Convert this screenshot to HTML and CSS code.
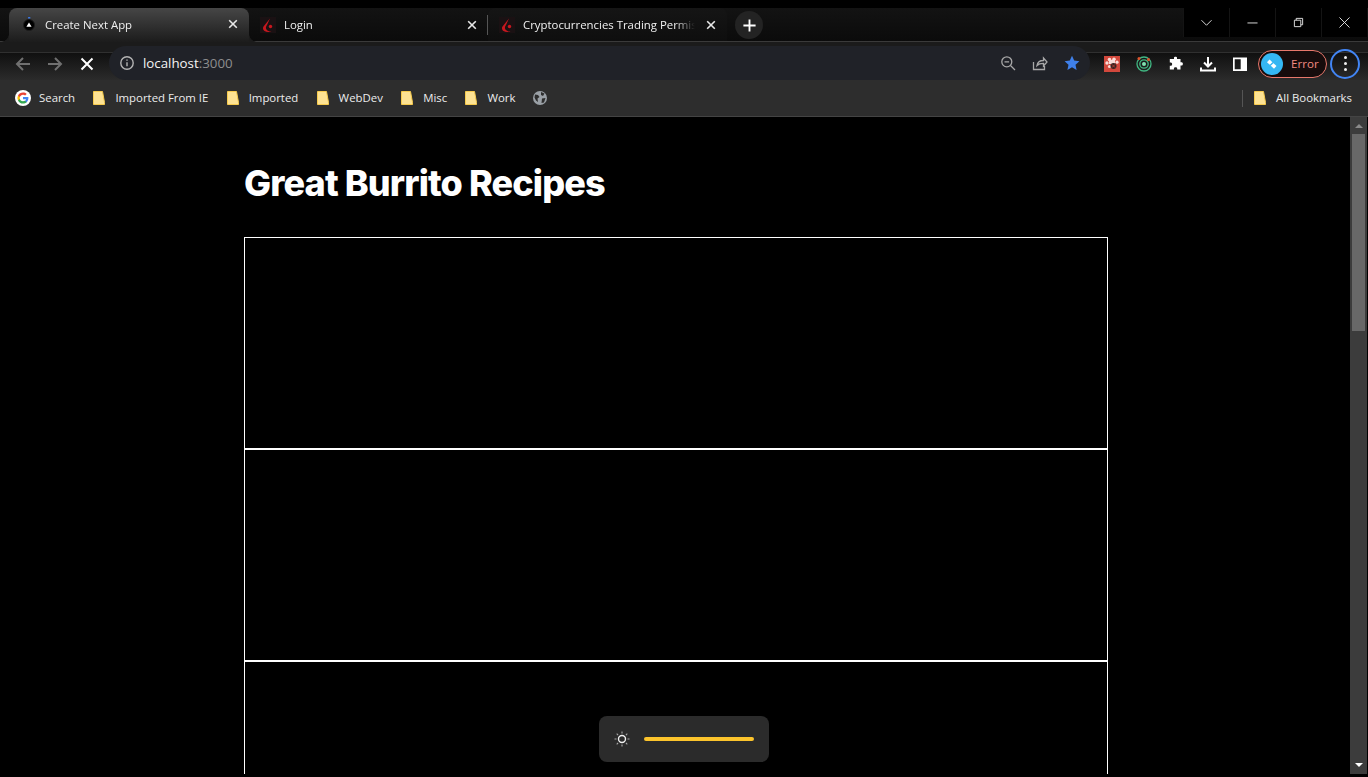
FILE: index.html
```html
<!DOCTYPE html>
<html lang="en">

<head>
  <meta charset="UTF-8">
  <meta name="viewport" content="width=device-width, initial-scale=1.0">
  <title>Create Next App</title>
  <link rel="stylesheet" href="styles.css">
</head>

<body>
  <div class="tabstrip">
    <div class="tab tab-active">
      <svg class="favicon" viewBox="0 0 16 16">
        <circle cx="8" cy="9" r="5.5" fill="#000" stroke="#1c1c1c"/>
        <path d="M8 6.4l2.6 4.4H5.4z" fill="#fff"/>
        <rect x="7" y="1" width="2.4" height="1.6" rx=".6" fill="#3b78e7"/>
      </svg>
      <span class="tab-title">Create Next App</span>
      <svg class="tab-close" viewBox="0 0 16 16"><path d="M4.2 4.2l7.6 7.6M11.8 4.2l-7.6 7.6"/></svg>
    </div>
    <div class="tab">
      <svg class="favicon" viewBox="0 0 16 16">
        <rect width="16" height="16" fill="#1a1113"/>
        <path d="M10 1.5L3.5 9.5c-1 1.500-.5 3.500 1 4.500 2 1.200 4.500 1 7 .5-3-.2-5-1-5.500-3-.3-1.200.3-2.500 1-3.500z" fill="#c8171e"/>
        <circle cx="10.5" cy="9.500" r="1.700" fill="#c8171e"/>
      </svg>
      <span class="tab-title">Login</span>
      <svg class="tab-close" viewBox="0 0 16 16"><path d="M4.2 4.2l7.6 7.6M11.8 4.2l-7.6 7.6"/></svg>
    </div>
    <div class="tab tab-hover">
      <svg class="favicon" viewBox="0 0 16 16">
        <rect width="16" height="16" fill="#1a1113"/>
        <path d="M10 1.5L3.5 9.5c-1 1.500-.5 3.500 1 4.500 2 1.200 4.500 1 7 .5-3-.2-5-1-5.500-3-.3-1.200.3-2.500 1-3.500z" fill="#c8171e"/>
        <circle cx="10.5" cy="9.500" r="1.700" fill="#c8171e"/>
      </svg>
      <span class="tab-title">Cryptocurrencies Trading Permissions</span>
      <svg class="tab-close" viewBox="0 0 16 16"><path d="M4.2 4.2l7.6 7.6M11.8 4.2l-7.6 7.6"/></svg>
    </div>
    <div class="new-tab">
      <svg viewBox="0 0 16 16"><path d="M8 1.500v13M1.500 8h13"/></svg>
    </div>
    <div class="window-controls">
      <div class="win-btn"><svg viewBox="0 0 12 12"><path d="M.5 3.500L6 9l5.500-5.500"/></svg></div>
      <div class="win-btn"><svg viewBox="0 0 12 12"><path d="M.5 6.500h11"/></svg></div>
      <div class="win-btn"><svg viewBox="0 0 12 12"><path d="M1.500 3.500h7v7h-7zM3.500 3.500v-2h7v7h-2"/></svg></div>
      <div class="win-btn"><svg viewBox="0 0 12 12"><path d="M.5.500l11 11M11.500.500l-11 11"/></svg></div>
    </div>
  </div>

  <div class="toolbar">
    <div class="tool-btn">
      <svg class="dim" viewBox="0 0 16 16"><path d="M15 8H2M8 2L2 8l6 6"/></svg>
    </div>
    <div class="tool-btn">
      <svg class="dim" viewBox="0 0 16 16"><path d="M1 8h13M8 2l6 6-6 6"/></svg>
    </div>
    <div class="tool-btn">
      <svg class="bright" viewBox="0 0 16 16"><path d="M2.500 2.500l11 11M13.500 2.500l-11 11"/></svg>
    </div>

    <div class="omnibox">
      <svg class="omni-info" viewBox="0 0 16 16">
        <circle cx="8" cy="8" r="6.200"/>
        <path d="M8 7.200v4M8 4.400v1.400"/>
      </svg>
      <span class="url">localhost<span class="url-port">:3000</span></span>
      <div class="omni-actions">
        <svg class="omni-icon" viewBox="0 0 16 16">
          <circle cx="6.800" cy="6.800" r="5"/>
          <path d="M10.500 10.500l4.500 4.500M4.500 6.800h4.600"/>
        </svg>
        <svg class="omni-icon" viewBox="0 0 16 16">
          <path d="M1.500 7v7.500h11V11M5 10.500c.5-3.500 3.500-5 6.500-5V3l3.500 4-3.500 4V8.300c-2.500 0-5 .5-6.500 2.200z"/>
        </svg>
        <svg class="omni-star" viewBox="0 0 16 16">
          <path d="M8 .8l2.200 4.800 5.200.6-3.900 3.500 1.100 5.200L8 12.300l-4.600 2.600 1.100-5.200L.6 6.200l5.200-.6z"/>
        </svg>
      </div>
    </div>

    <div class="tool-btn">
      <svg class="ext" viewBox="0 0 16 16">
        <rect width="16" height="16" fill="#d2483c"/>
        <g fill="#f8dcd7">
          <circle cx="5.500" cy="3.500" r="1.800"/>
          <circle cx="10" cy="3.200" r="1.800"/>
          <circle cx="13" cy="6.200" r="1.600"/>
          <circle cx="3" cy="7" r="1.700"/>
          <circle cx="5.500" cy="10.500" r="1.600"/>
          <rect x="5" y="4" width="6" height="4"/>
        </g>
        <circle cx="9.500" cy="10" r="3" fill="#3a2320"/>
        <path d="M8 8.500l3 3M11 8.500l-3 3" stroke="#d2483c" stroke-width=".7"/>
      </svg>
    </div>
    <div class="tool-btn">
      <svg class="ext" viewBox="0 0 16 16">
        <circle cx="8" cy="8" r="7" fill="none" stroke="#41b883" stroke-width="1.300"/>
        <circle cx="8" cy="8" r="4.200" fill="none" stroke="#41b883" stroke-width="1.300"/>
        <circle cx="8" cy="8" r="2" fill="#7fe0b0"/>
        <circle cx="3" cy="2.500" r="1.500" fill="#e0532c"/>
        <circle cx="12.500" cy="3.500" r="1.500" fill="#e0532c"/>
      </svg>
    </div>
    <div class="tool-btn">
      <svg class="ext" viewBox="0 0 16 16">
        <path d="M6 1.500c0-1 3-1 3 0V3h3.500v3.200h1.200c1.600 0 1.600 3.300 0 3.300h-1.200v4H9.200v-1c0-1.800-3.300-1.800-3.300 0v1H1.800V9.800h1c1.800 0 1.800-3.300 0-3.300h-1V3H6z" fill="#fff"/>
      </svg>
    </div>
    <div class="tool-btn">
      <svg class="ext ext-line" viewBox="0 0 16 16">
        <path d="M8 1v9M4 6.500L8 10.500l4-4M1 11.500v3h14v-3"/>
      </svg>
    </div>
    <div class="tool-btn">
      <svg class="ext" viewBox="0 0 16 16">
        <path fill-rule="evenodd" d="M1 1.500h14v13.500H1zM2.700 3.200v10h6v-10z" fill="#fff"/>
      </svg>
    </div>

    <div class="profile-pill">
      <span class="avatar">
        <svg viewBox="0 0 22 22">
          <path d="M8.500 6.500l7 6.500-2.500 2.700-7-6.500z" fill="#fff"/>
          <path d="M9 12.500l3.500-3.200" stroke="#35b7f3" stroke-width="1.400"/>
        </svg>
      </span>
      <span class="pill-label">Error</span>
    </div>
    <div class="menu-btn">
      <span></span><span></span><span></span>
    </div>
  </div>

  <div class="bookmarks">
    <div class="bookmark">
      <svg class="g-logo" viewBox="0 0 16 16">
        <circle cx="8" cy="8" r="8" fill="#fff"/>
        <path d="M13.400 8.100c0-.4 0-.8-.1-1.100H8v2.200h3a2.600 2.600 0 0 1-1.100 1.700v1.400h1.800c1-1 1.700-2.500 1.700-4.200z" fill="#4285f4"/>
        <path d="M8 13.500c1.500 0 2.800-.5 3.700-1.300l-1.800-1.400c-.5.300-1.100.5-1.900.5-1.400 0-2.700-1-3.100-2.300H3v1.400c.9 1.900 2.800 3.100 5 3.100z" fill="#34a853"/>
        <path d="M4.900 9c-.2-.7-.2-1.400 0-2V5.500H3a5.500 5.500 0 0 0 0 5z" fill="#fbbc05"/>
        <path d="M8 4.700c.8 0 1.600.3 2.100.8l1.600-1.600C10.800 3 9.500 2.500 8 2.500c-2.200 0-4.100 1.200-5 3L4.900 7C5.300 5.700 6.600 4.700 8 4.700z" fill="#ea4335"/>
      </svg>
      <span>Search</span>
    </div>
    <div class="bookmark">
      <svg class="folder" viewBox="0 0 12 14"><path d="M.5.500h9l2 11v2H.5z"/></svg>
      <span>Imported From IE</span>
    </div>
    <div class="bookmark">
      <svg class="folder" viewBox="0 0 12 14"><path d="M.5.500h9l2 11v2H.5z"/></svg>
      <span>Imported</span>
    </div>
    <div class="bookmark">
      <svg class="folder" viewBox="0 0 12 14"><path d="M.5.500h9l2 11v2H.5z"/></svg>
      <span>WebDev</span>
    </div>
    <div class="bookmark">
      <svg class="folder" viewBox="0 0 12 14"><path d="M.5.500h9l2 11v2H.5z"/></svg>
      <span>Misc</span>
    </div>
    <div class="bookmark">
      <svg class="folder" viewBox="0 0 12 14"><path d="M.5.500h9l2 11v2H.5z"/></svg>
      <span>Work</span>
    </div>
    <svg class="globe" viewBox="0 0 14 14">
      <circle cx="7" cy="7" r="7" fill="#9aa0a6"/>
      <path d="M2 3.500l3 .5 1.500 2-2 1.500L5 11 3 9.500 1.500 6.500zM8 1l3.500 1.500L10 5 8 4zM9 7.500l3.500-.5L11 11.500 8.500 12z" fill="#2d2d2d"/>
    </svg>
    <div class="bookmarks-end">
      <div class="bookmark">
        <svg class="folder" viewBox="0 0 12 14"><path d="M.5.500h9l2 11v2H.5z"/></svg>
        <span>All Bookmarks</span>
      </div>
    </div>
  </div>

  <div class="viewport">
    <main class="page">
      <h1 class="page-title">Great Burrito Recipes</h1>
      <div class="recipe-card"></div>
      <div class="recipe-card"></div>
      <div class="recipe-card"></div>
    </main>
    <div class="scrollbar">
      <svg class="scroll-arrow" viewBox="0 0 8 4"><path d="M4 0l4 4H0z"/></svg>
      <div class="scroll-thumb"></div>
      <svg class="scroll-arrow scroll-arrow-down" viewBox="0 0 8 4"><path d="M0 0h8L4 4z"/></svg>
    </div>
    <div class="toast">
      <svg class="sun" viewBox="0 0 16 16">
        <circle cx="8" cy="8" r="3.500"/>
        <path class="rays" d="M8 .5v2M8 13.500v2M.5 8h2M13.500 8h2M2.700 2.700l1.400 1.400M11.900 11.900l1.400 1.400M13.300 2.700l-1.400 1.400M4.100 11.900l-1.400 1.400"/>
      </svg>
      <div class="slider"></div>
    </div>
  </div>
</body>

</html>
```

FILE: styles.css
```css
* {
  box-sizing: border-box;
}

body {
  display: flex;
  flex-direction: column;
  height: 100vh;
  margin: 0;
  padding-bottom: 3px;
  overflow: hidden;
  background: #000;
  font-family: "Open Sans", sans-serif;
  color: #f0f0f0;
}

svg {
  display: block;
  flex-shrink: 0;
}

/* tabs */
.tabstrip {
  display: flex;
  align-items: flex-start;
  height: 33px;
  margin-top: 8px;
  padding-left: 9px;
  background: linear-gradient(to bottom, #131313, #0b0b0b);
}

.tab {
  position: relative;
  display: flex;
  align-items: center;
  width: 239px;
  height: 33px;
  padding: 0 8px 0 11px;
  font-size: 11.4px;
}

.tab-active {
  z-index: 1;
  width: 240px;
  height: 34px;
  padding: 0 8px 2px 12px;
  border-radius: 8px 8px 0 0;
  background: linear-gradient(to bottom, #464646, #1c1c1c);
}

.tab-active::before,
.tab-active::after {
  content: "";
  position: absolute;
  bottom: 0;
  width: 8px;
  height: 8px;
}

.tab-active::before {
  left: -8px;
  background: radial-gradient(circle at 0 0, transparent 7.5px, #1c1c1c 8px);
}

.tab-active::after {
  right: -8px;
  background: radial-gradient(circle at 100% 0, transparent 7.5px, #1c1c1c 8px);
}

.tab-hover {
  border-radius: 8px 8px 0 0;
  background: linear-gradient(to bottom, #151515, #0e0e0e);
}

.tab + .tab-hover::before {
  content: "";
  position: absolute;
  left: -1px;
  top: 7px;
  width: 1px;
  height: 20px;
  background: #555;
}

.favicon {
  width: 16px;
  height: 16px;
}

.tab-title {
  flex: 1;
  min-width: 0;
  margin: 0 8px;
  overflow: hidden;
  white-space: nowrap;
  -webkit-mask-image: linear-gradient(to left, transparent 0, #000 20px);
  mask-image: linear-gradient(to left, transparent 0, #000 20px);
}

.tab-close {
  width: 16px;
  height: 16px;
  fill: none;
  stroke: #e8e8e8;
  stroke-width: 1.6;
}

.new-tab {
  display: flex;
  align-items: center;
  justify-content: center;
  width: 28px;
  height: 28px;
  margin: 3px 0 0 8px;
  border-radius: 50%;
  background: #232323;
}

.new-tab svg {
  width: 15px;
  height: 15px;
  fill: none;
  stroke: #fff;
  stroke-width: 2;
}

.window-controls {
  display: flex;
  height: 29px;
  margin: 0 1px 0 auto;
  background: #000;
}

.win-btn {
  display: flex;
  align-items: center;
  justify-content: center;
  width: 46px;
  height: 29px;
  border-left: 1px solid #141414;
}

.win-btn svg {
  width: 11px;
  height: 11px;
  fill: none;
  stroke: #e8e8e8;
  stroke-width: 1;
}

/* toolbar */
.toolbar {
  display: flex;
  align-items: center;
  height: 39px;
  padding: 0 8px 0 7px;
  border-top: 1px solid #3a3a3a;
  background: linear-gradient(to bottom, #1b1b1b 0, #1b1b1b 10px, #303030 10px, #303030 11px, #101010 11px, #2b2b2b 100%);
}

.tool-btn {
  display: flex;
  align-items: center;
  justify-content: center;
  width: 32px;
  height: 32px;
  margin-top: 5px;
}

.tool-btn .dim,
.tool-btn .bright {
  width: 16px;
  height: 16px;
  fill: none;
  stroke-width: 2;
}

.tool-btn .dim {
  stroke: #707070;
}

.tool-btn .bright {
  stroke: #fff;
}

.omnibox {
  display: flex;
  flex: 1;
  align-items: center;
  align-self: flex-end;
  height: 34px;
  margin: 0 6px;
  padding: 0 10px;
  border-radius: 17px;
  background: #202228;
}

.omni-info {
  width: 16px;
  height: 16px;
  fill: none;
  stroke: #b4b4b4;
  stroke-width: 1.400;
}

.url {
  margin-left: 8px;
  font-size: 13.3px;
  color: #f4f4f4;
}

.url-port {
  color: #8e8e8e;
}

.omni-actions {
  display: flex;
  align-items: center;
  gap: 16px;
  margin-left: auto;
}

.omni-icon {
  width: 16px;
  height: 16px;
  fill: none;
  stroke: #a8a8a8;
  stroke-width: 1.300;
}

.omni-star {
  width: 16px;
  height: 16px;
  fill: #3f80ea;
}

.ext {
  width: 16px;
  height: 16px;
}

.ext-line {
  fill: none;
  stroke: #fff;
  stroke-width: 2;
}

.profile-pill {
  display: flex;
  align-items: center;
  width: 69px;
  height: 28px;
  margin: 5px 0 0 2px;
  padding-left: 2px;
  border: 1px solid #e8786c;
  border-radius: 14px;
  background: #160c0c;
}

.avatar {
  width: 22px;
  height: 22px;
  border-radius: 50%;
  background: #35b7f3;
}

.pill-label {
  margin-left: 8px;
  font-size: 11.6px;
  color: #f28b82;
}

.menu-btn {
  display: flex;
  flex-direction: column;
  align-items: center;
  justify-content: center;
  gap: 3px;
  width: 30px;
  height: 30px;
  margin: 5px 0 0 3px;
  border: 2px solid #4285f4;
  border-radius: 50%;
}

.menu-btn span {
  width: 3px;
  height: 3px;
  border-radius: 50%;
  background: #f0f0f0;
}

/* bookmarks */
.bookmarks {
  display: flex;
  align-items: center;
  gap: 18.3px;
  height: 37px;
  padding: 0 16px 0 15px;
  border-bottom: 1px solid #444;
  background: #2d2d2d;
  font-size: 11.4px;
}

.bookmark {
  display: flex;
  align-items: center;
  gap: 10px;
  color: #ececec;
}

.bookmark span {
  margin-bottom: 2px;
}

.g-logo {
  width: 16px;
  height: 16px;
  margin-right: -2px;
}

.folder {
  width: 12px;
  height: 14px;
  fill: #fde293;
  stroke: #f7cb4d;
}

.globe {
  width: 14px;
  height: 14px;
  margin-left: -1px;
}

.bookmarks-end {
  margin-left: auto;
  padding-left: 11px;
  border-left: 1px solid #555;
}

/* page */
.viewport {
  position: relative;
  display: flex;
  flex: 1;
  min-height: 0;
}

.page {
  flex: 1;
  min-width: 0;
  padding: 46px 0 0 244px;
  overflow: hidden;
  background: #000;
}

.page-title {
  margin: 0 0 34px;
  font-family: Inter, sans-serif;
  font-size: 36px;
  font-weight: 800;
  line-height: 40px;
  letter-spacing: -0.024em;
  color: #fff;
}

.recipe-card {
  width: 864px;
  height: 212px;
  border: 1px solid #fff;
}

.scrollbar {
  display: flex;
  flex-direction: column;
  align-items: center;
  width: 17px;
  margin-right: 1px;
  padding: 7px 2px;
  background: #3c3c3c;
}

.scroll-arrow {
  width: 8px;
  height: 4px;
  fill: #8a8a8a;
}

.scroll-arrow-down {
  margin-top: auto;
  fill: #fff;
}

.scroll-thumb {
  width: 13px;
  height: 197px;
  margin-top: 6px;
  background: #686868;
}

.toast {
  position: absolute;
  bottom: 12px;
  left: 50%;
  display: flex;
  align-items: center;
  gap: 14px;
  width: 170px;
  height: 46px;
  padding: 0 15px;
  border-radius: 8px;
  background: #2b2b2b;
  transform: translateX(-50%);
}

.sun {
  width: 16px;
  height: 16px;
  fill: none;
  stroke: #f0f0f0;
  stroke-width: 1.400;
}

.sun .rays {
  stroke: #a8a8a8;
  stroke-width: 1.100;
}

.slider {
  width: 110px;
  height: 4px;
  border-radius: 2px;
  background: #fcc42c;
}
```
